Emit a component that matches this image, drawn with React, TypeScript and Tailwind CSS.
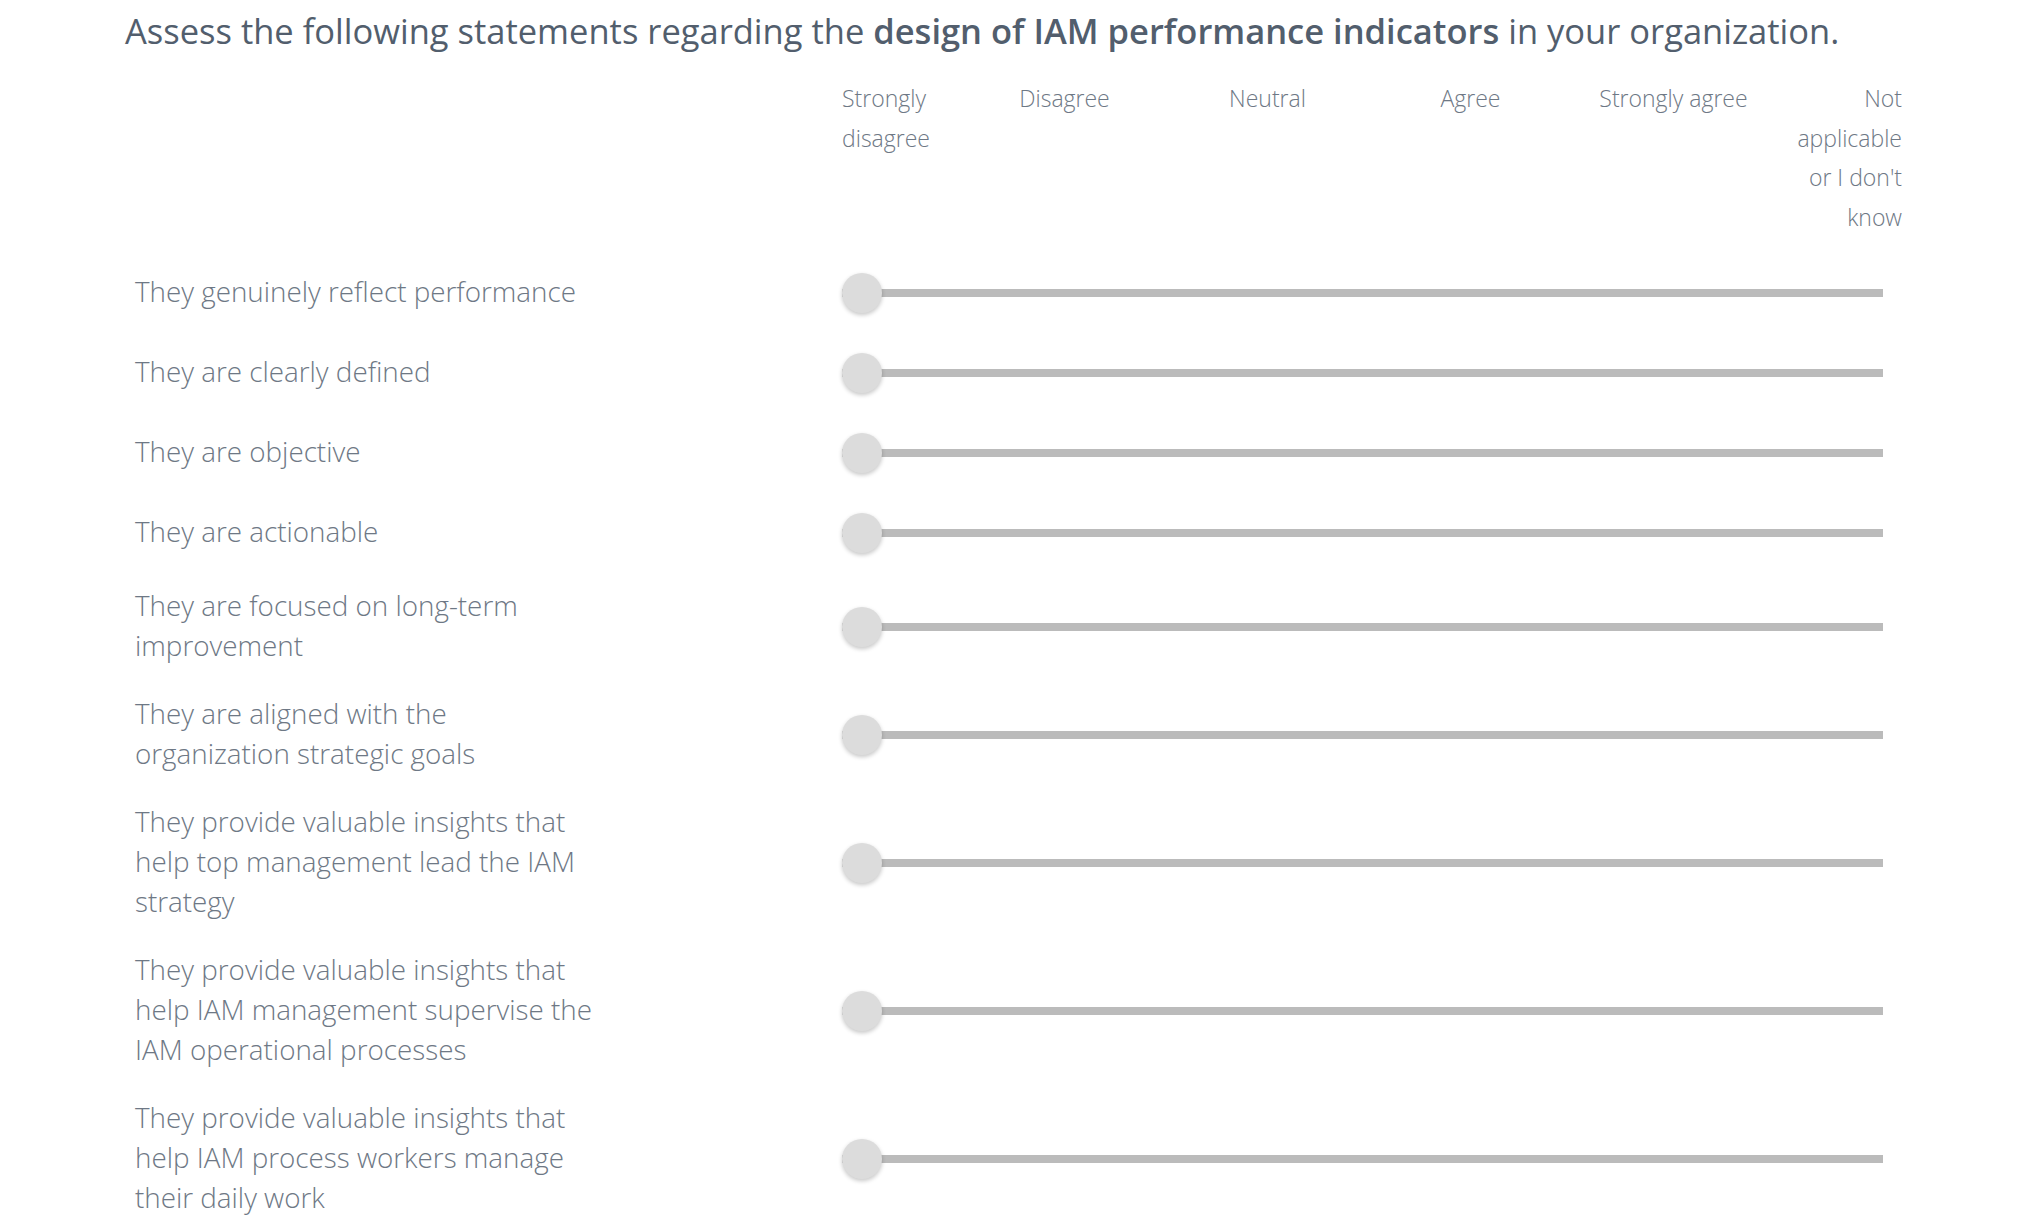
import React from "react";

const rows: string[][] = [
  ["They genuinely reflect performance"],
  ["They are clearly defined"],
  ["They are objective"],
  ["They are actionable"],
  ["They are focused on long-term", "improvement"],
  ["They are aligned with the", "organization strategic goals"],
  ["They provide valuable insights that", "help top management lead the IAM", "strategy"],
  ["They provide valuable insights that", "help IAM management supervise the", "IAM operational processes"],
  ["They provide valuable insights that", "help IAM process workers manage", "their daily work"],
];

function Slider() {
  return (
    <div className="relative mt-[3px] flex h-[40px] w-[1041px] shrink-0 items-center">
      <div className="h-[8px] w-full bg-[#bbbbbb]" />
      <div className="absolute left-0 top-0 h-[40px] w-[40px] rounded-full bg-[#dcdcdc] shadow-[0_2px_4px_rgba(0,0,0,0.22)]" />
    </div>
  );
}

export default function App() {
  return (
    <div
      className="h-[1230px] w-[2042px] overflow-hidden bg-white"
      style={{ fontFamily: '"Open Sans", "Noto Sans", sans-serif' }}
    >
      <h1 className="whitespace-nowrap pl-[125px] pt-[7px] text-[34.5px] font-normal leading-[48px] text-[#525e6d]">
        Assess the following statements regarding the{" "}
        <span className="font-semibold">design of IAM performance indicators</span> in your
        organization.
      </h1>

      <div className="mt-[24px] flex whitespace-nowrap pl-[842px] text-[23px] font-light leading-[39.6px] text-[#6e7885]">
        <div className="w-[121px] text-left">
          Strongly
          <br />
          disagree
        </div>
        <div className="w-[203px] text-center">Disagree</div>
        <div className="w-[203px] text-center">Neutral</div>
        <div className="w-[203px] text-center">Agree</div>
        <div className="w-[203px] text-center">Strongly agree</div>
        <div className="w-[127px] text-right">
          Not
          <br />
          applicable
          <br />
          or I don't
          <br />
          know
        </div>
      </div>

      <div className="mt-[14px] flex flex-col">
        {rows.map((lines, i) => (
          <div key={i} className="flex min-h-[80px] items-center py-[14px]">
            <div className="w-[842px] shrink-0 pl-[135px] text-[27.8px] font-light leading-[40px] text-[#6e7885]">
              {lines.map((l, j) => (
                <div key={j} className="whitespace-nowrap">
                  {l}
                </div>
              ))}
            </div>
            <Slider />
          </div>
        ))}
      </div>
    </div>
  );
}
